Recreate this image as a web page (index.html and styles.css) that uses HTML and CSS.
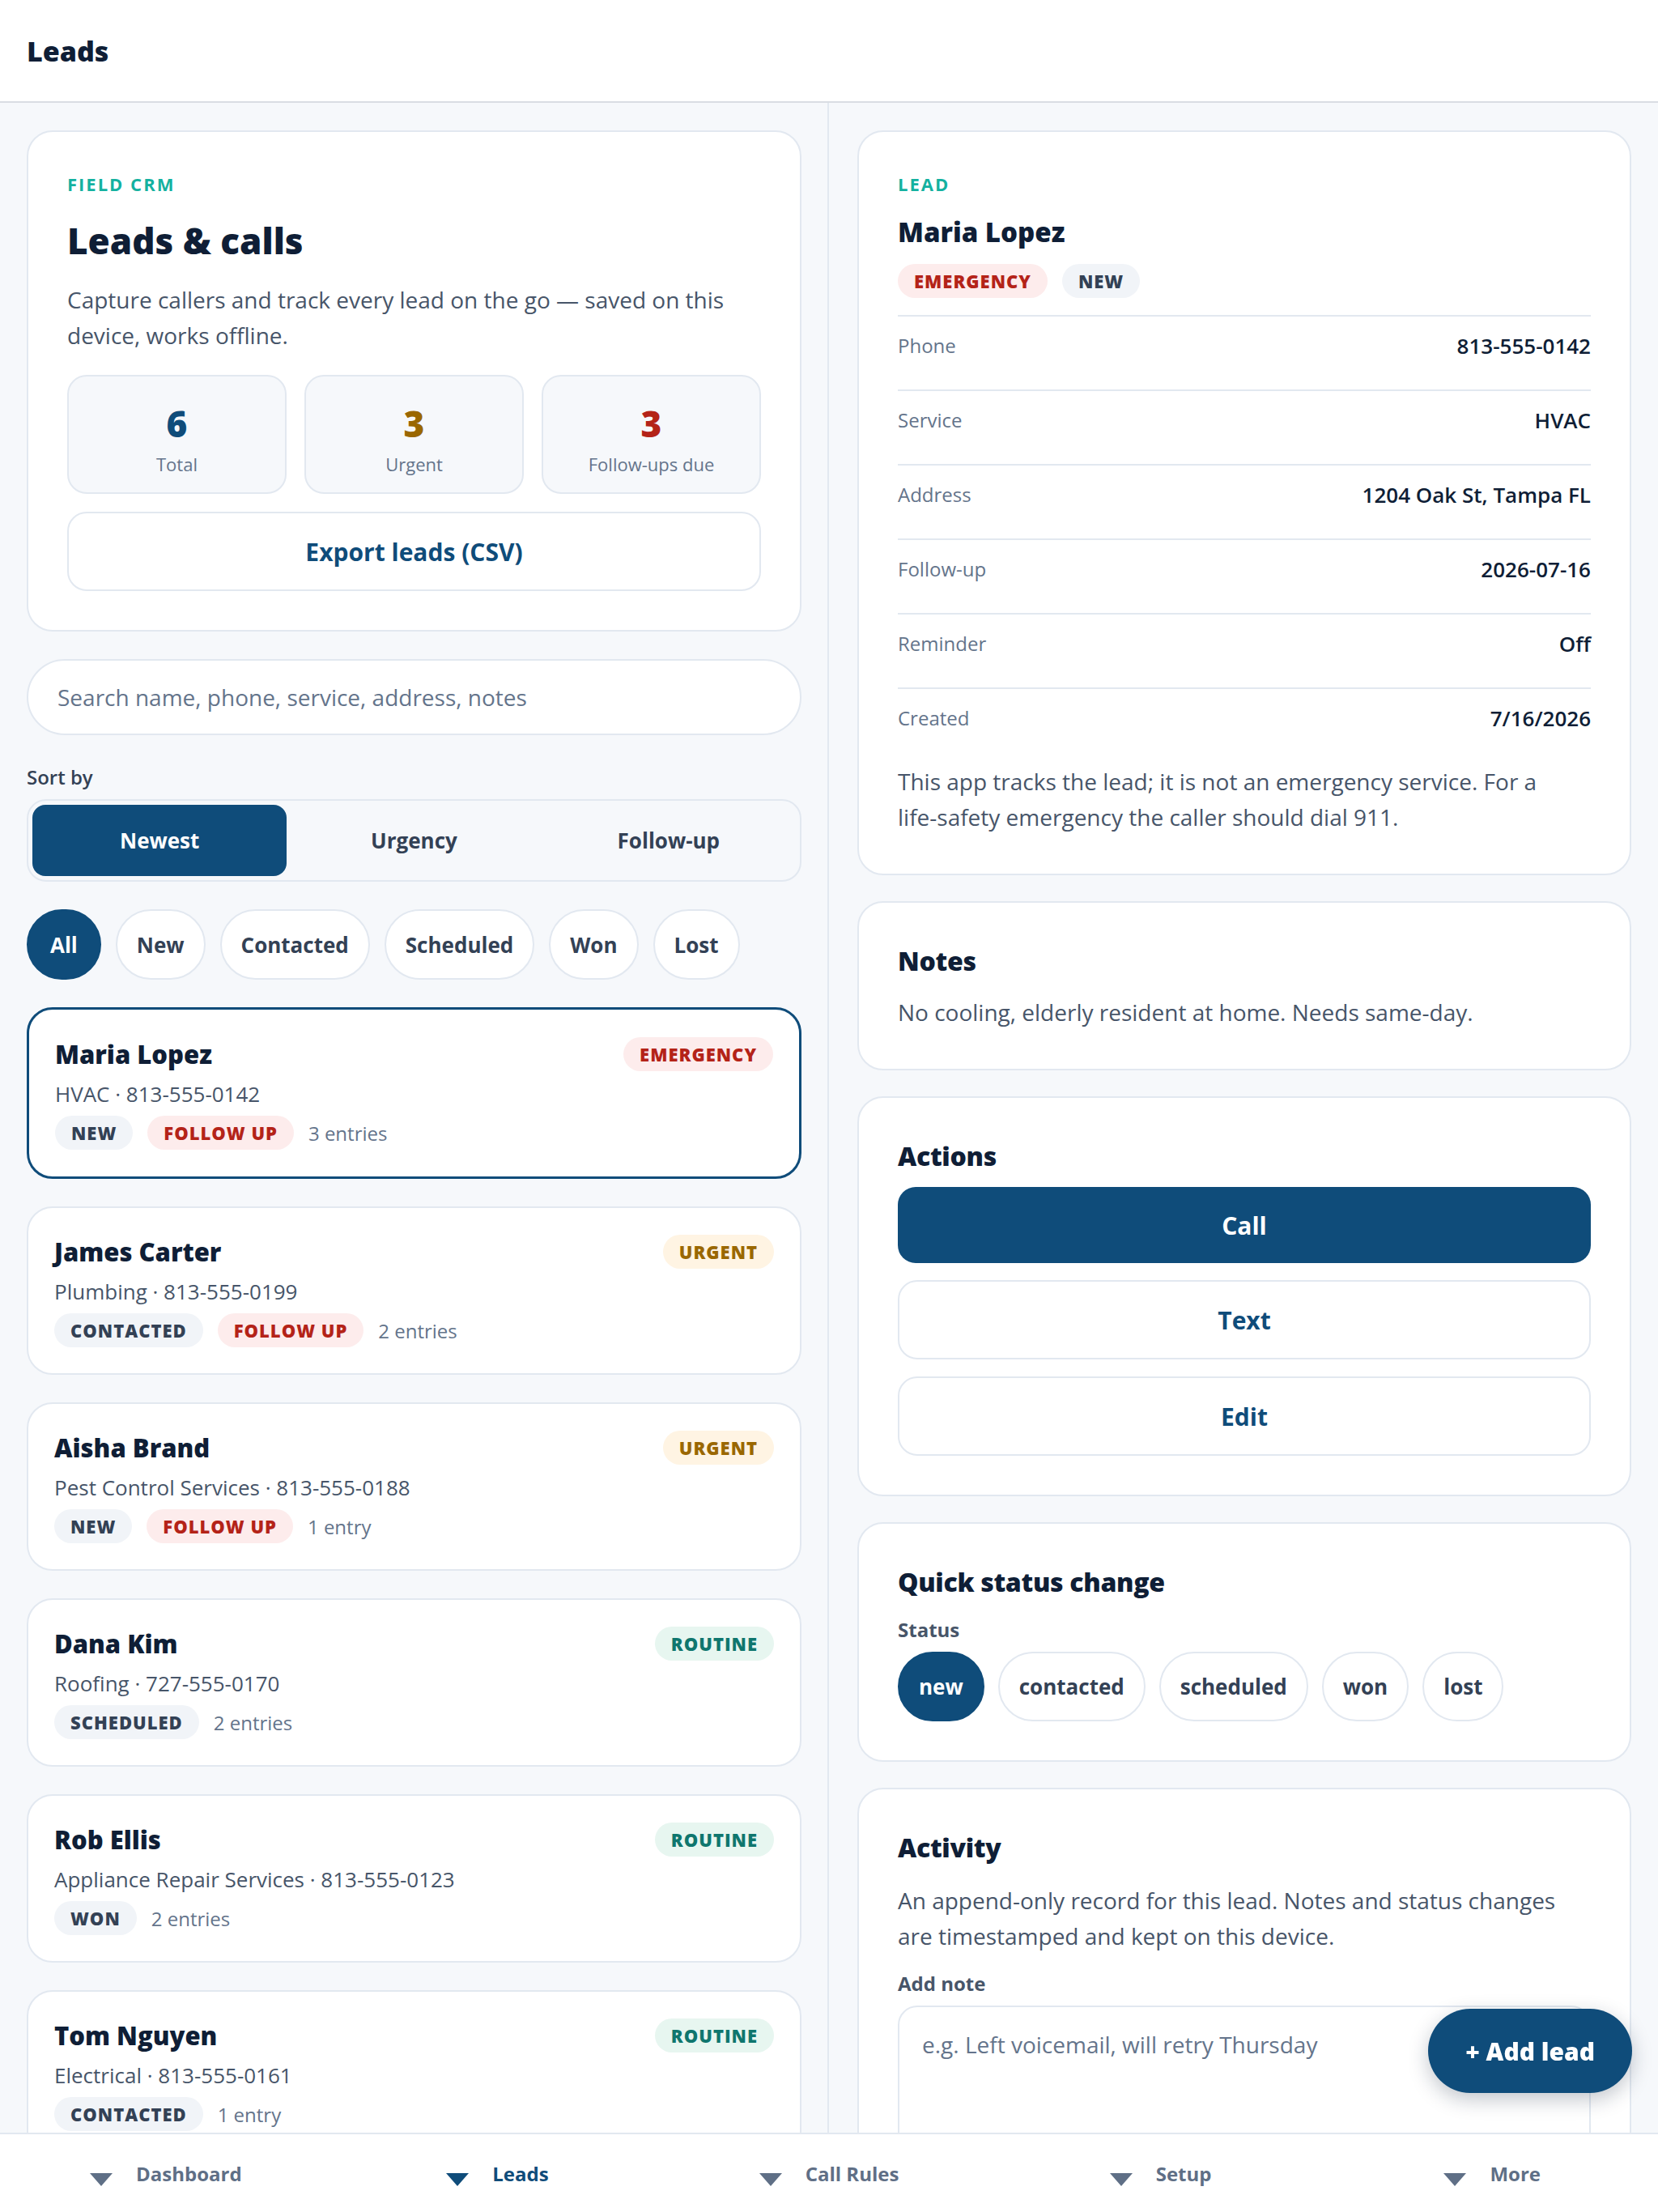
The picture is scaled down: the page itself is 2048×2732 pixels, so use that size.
FILE: index.html
```html
<!DOCTYPE html>
<html lang="en">
<head>
    <meta charset="UTF-8">
    <meta name="viewport" content="width=device-width, initial-scale=1.0">
    <title>Leads</title>
    <link rel="stylesheet" href="styles.css">
</head>
<body>
    <header class="topbar">
        <h1>Leads</h1>
    </header>

    <main class="layout">
        <section class="list-pane">
            <div class="card hero">
                <p class="eyebrow">Field CRM</p>
                <h2>Leads &amp; calls</h2>
                <p class="lede">Capture callers and track every lead on the go — saved on this device, works offline.</p>
                <div class="stats">
                    <div class="stat"><strong class="c-navy">6</strong><span>Total</span></div>
                    <div class="stat"><strong class="c-amber">3</strong><span>Urgent</span></div>
                    <div class="stat"><strong class="c-red">3</strong><span>Follow-ups due</span></div>
                </div>
                <button class="btn btn-outline export">Export leads (CSV)</button>
            </div>

            <input type="text" class="search" placeholder="Search name, phone, service, address, notes">

            <div class="sort">
                <label class="field-label">Sort by</label>
                <div class="segmented">
                    <button class="active">Newest</button>
                    <button>Urgency</button>
                    <button>Follow-up</button>
                </div>
            </div>

            <div class="chips">
                <button class="chip chip-all active">All</button>
                <button class="chip">New</button>
                <button class="chip">Contacted</button>
                <button class="chip">Scheduled</button>
                <button class="chip">Won</button>
                <button class="chip">Lost</button>
            </div>

            <div class="lead selected">
                <div class="lead-top">
                    <h3>Maria Lopez</h3>
                    <span class="pill pill-red">Emergency</span>
                </div>
                <div class="lead-sub">HVAC · 813-555-0142</div>
                <div class="lead-tags">
                    <span class="pill pill-grey">New</span>
                    <span class="pill pill-red">Follow up</span>
                    <span class="entries">3 entries</span>
                </div>
            </div>

            <div class="lead">
                <div class="lead-top">
                    <h3>James Carter</h3>
                    <span class="pill pill-amber">Urgent</span>
                </div>
                <div class="lead-sub">Plumbing · 813-555-0199</div>
                <div class="lead-tags">
                    <span class="pill pill-grey">Contacted</span>
                    <span class="pill pill-red">Follow up</span>
                    <span class="entries">2 entries</span>
                </div>
            </div>

            <div class="lead">
                <div class="lead-top">
                    <h3>Aisha Brand</h3>
                    <span class="pill pill-amber">Urgent</span>
                </div>
                <div class="lead-sub">Pest Control Services · 813-555-0188</div>
                <div class="lead-tags">
                    <span class="pill pill-grey">New</span>
                    <span class="pill pill-red">Follow up</span>
                    <span class="entries">1 entry</span>
                </div>
            </div>

            <div class="lead">
                <div class="lead-top">
                    <h3>Dana Kim</h3>
                    <span class="pill pill-green">Routine</span>
                </div>
                <div class="lead-sub">Roofing · 727-555-0170</div>
                <div class="lead-tags">
                    <span class="pill pill-grey">Scheduled</span>
                    <span class="entries">2 entries</span>
                </div>
            </div>

            <div class="lead">
                <div class="lead-top">
                    <h3>Rob Ellis</h3>
                    <span class="pill pill-green">Routine</span>
                </div>
                <div class="lead-sub">Appliance Repair Services · 813-555-0123</div>
                <div class="lead-tags">
                    <span class="pill pill-grey">Won</span>
                    <span class="entries">2 entries</span>
                </div>
            </div>

            <div class="lead">
                <div class="lead-top">
                    <h3>Tom Nguyen</h3>
                    <span class="pill pill-green">Routine</span>
                </div>
                <div class="lead-sub">Electrical · 813-555-0161</div>
                <div class="lead-tags">
                    <span class="pill pill-grey">Contacted</span>
                    <span class="entries">1 entry</span>
                </div>
            </div>
        </section>

        <section class="detail-pane">
            <div class="card">
                <p class="eyebrow">Lead</p>
                <h2 class="detail-name">Maria Lopez</h2>
                <div class="detail-pills">
                    <span class="pill pill-red">Emergency</span>
                    <span class="pill pill-grey">New</span>
                </div>
                <dl class="facts">
                    <div class="fact"><dt>Phone</dt><dd>813-555-0142</dd></div>
                    <div class="fact"><dt>Service</dt><dd>HVAC</dd></div>
                    <div class="fact"><dt>Address</dt><dd>1204 Oak St, Tampa FL</dd></div>
                    <div class="fact"><dt>Follow-up</dt><dd>2026-07-16</dd></div>
                    <div class="fact"><dt>Reminder</dt><dd>Off</dd></div>
                    <div class="fact"><dt>Created</dt><dd>7/16/2026</dd></div>
                </dl>
                <p class="muted disclaimer">This app tracks the lead; it is not an emergency service. For a <span class="nowrap">life-safety</span> emergency the caller should dial 911.</p>
            </div>

            <div class="card">
                <h3 class="card-title">Notes</h3>
                <p class="muted note-text">No cooling, elderly resident at home. Needs same-day.</p>
            </div>

            <div class="card">
                <h3 class="card-title">Actions</h3>
                <div class="actions">
                    <button class="btn btn-primary">Call</button>
                    <button class="btn btn-outline">Text</button>
                    <button class="btn btn-outline">Edit</button>
                </div>
            </div>

            <div class="card">
                <h3 class="card-title">Quick status change</h3>
                <label class="field-label status-label">Status</label>
                <div class="chips status-chips">
                    <button class="chip active">new</button>
                    <button class="chip">contacted</button>
                    <button class="chip">scheduled</button>
                    <button class="chip">won</button>
                    <button class="chip">lost</button>
                </div>
            </div>

            <div class="card">
                <h3 class="card-title">Activity</h3>
                <p class="muted activity-text">An append-only record for this lead. Notes and status changes are timestamped and kept on this device.</p>
                <label class="field-label note-label" for="note">Add note</label>
                <textarea id="note" class="note-input" placeholder="e.g. Left voicemail, will retry Thursday"></textarea>
            </div>
        </section>
    </main>

    <button class="fab">+ Add lead</button>

    <nav class="tabbar">
        <a class="tab"><svg viewBox="0 0 28 16"><polygon points="0,0 28,0 14,16"/></svg>Dashboard</a>
        <a class="tab active"><svg viewBox="0 0 28 16"><polygon points="0,0 28,0 14,16"/></svg>Leads</a>
        <a class="tab"><svg viewBox="0 0 28 16"><polygon points="0,0 28,0 14,16"/></svg>Call Rules</a>
        <a class="tab"><svg viewBox="0 0 28 16"><polygon points="0,0 28,0 14,16"/></svg>Setup</a>
        <a class="tab"><svg viewBox="0 0 28 16"><polygon points="0,0 28,0 14,16"/></svg>More</a>
    </nav>
</body>
</html>
```
FILE: styles.css
```css
* {
    box-sizing: border-box;
}
html, body {
    margin: 0;
    height: 100%;
}
body {
    font-family: "Open Sans", "Noto Sans", sans-serif;
    color: #0f1e36;
    background: #f6f8fb;
    display: flex;
    flex-direction: column;
    height: 100vh;
    overflow: hidden;
}
button, input, textarea {
    font-family: inherit;
}
.nowrap {
    white-space: nowrap;
}

/* top bar */
.topbar {
    height: 127px;
    flex-shrink: 0;
    background: #fff;
    border-bottom: 2px solid #d9dde3;
    display: flex;
    align-items: center;
    padding: 0 33px;
}
.topbar h1 {
    margin: 0;
    font-size: 34px;
    font-weight: 800;
}

/* two panes */
.layout {
    flex: 1;
    min-height: 0;
    display: grid;
    grid-template-columns: 1024px 1fr;
}
.list-pane, .detail-pane {
    display: flex;
    flex-direction: column;
    gap: 34px;
    overflow: hidden;
}
.list-pane > *, .detail-pane > * {
    flex-shrink: 0;
}
.list-pane {
    border-right: 2px solid #e2e8f0;
    padding: 34px 32px 0 33px;
}
.detail-pane {
    gap: 32px;
    padding: 34px 33px 0 35px;
}

.card {
    background: #fff;
    border: 2px solid #e2e8f0;
    border-radius: 32px;
    padding: 48px;
}
.eyebrow {
    margin: 0;
    font-size: 22px;
    line-height: 32px;
    font-weight: 700;
    letter-spacing: 2px;
    text-transform: uppercase;
    color: #14b1a0;
}
.muted {
    color: #475569;
    font-size: 28px;
    line-height: 44px;
}

/* hero */
.hero h2 {
    margin: 24px 0 0;
    font-size: 44px;
    line-height: 60px;
    font-weight: 800;
}
.lede {
    margin: 21px 0 0;
    font-size: 28px;
    line-height: 44px;
    color: #475569;
}
.stats {
    display: grid;
    grid-template-columns: repeat(3, 1fr);
    gap: 22px;
    margin-top: 27px;
}
.stat {
    background: #f6f8fb;
    border: 2px solid #e2e8f0;
    border-radius: 24px;
    padding: 28px 8px 19px;
    text-align: center;
}
.stat strong {
    display: block;
    font-size: 44px;
    line-height: 60px;
    font-weight: 800;
}
.stat span {
    display: block;
    margin-top: 4px;
    font-size: 22px;
    line-height: 32px;
    color: #64748b;
}
.c-navy { color: #0f4c7a; }
.c-amber { color: #9a6700; }
.c-red { color: #b42318; }

.btn {
    display: block;
    width: 100%;
    border-radius: 24px;
    font-size: 30px;
    font-weight: 700;
    cursor: pointer;
}
.btn-outline {
    height: 98px;
    background: #fff;
    border: 2px solid #e2e8f0;
    color: #0f4c7a;
}
.btn-primary {
    height: 94px;
    background: #0f4c7a;
    border: none;
    color: #fff;
    border-radius: 22px;
}
.export {
    margin-top: 22px;
}

/* search + sort */
.search {
    height: 94px;
    border: 2px solid #e2e8f0;
    border-radius: 47px;
    padding: 0 36px;
    font-size: 28px;
    color: #0f1e36;
    background: #fff;
    outline: none;
}
.search::placeholder, .note-input::placeholder {
    color: #64748b;
}
.field-label {
    display: block;
    font-size: 24px;
    line-height: 36px;
    font-weight: 600;
    color: #334155;
}
.segmented {
    margin-top: 9px;
    display: grid;
    grid-template-columns: repeat(3, 1fr);
    padding: 5px;
    border: 2px solid #e2e8f0;
    border-radius: 24px;
    background: #f6f8fb;
}
.segmented button {
    height: 88px;
    border: none;
    border-radius: 16px;
    background: transparent;
    font-size: 26px;
    font-weight: 700;
    color: #334155;
}
.segmented button.active {
    background: #0f4c7a;
    color: #fff;
}

.chips {
    display: flex;
    gap: 18px;
}
.chip {
    height: 87px;
    padding: 0 24px;
    border: 2px solid #e2e8f0;
    border-radius: 44px;
    background: #fff;
    font-size: 26px;
    font-weight: 700;
    color: #334155;
}
.chip-all {
    padding: 0 27px;
}
.chip.active {
    background: #0f4c7a;
    border-color: #0f4c7a;
    color: #fff;
}

/* lead list */
.lead {
    background: #fff;
    border: 2px solid #e2e8f0;
    border-radius: 32px;
    padding: 32px;
}
.lead.selected {
    border: 3px solid #0f4c7a;
    padding: 33px 32px;
}
.lead-top {
    display: flex;
    justify-content: space-between;
    align-items: center;
}
.lead-top h3 {
    margin: 0;
    font-size: 31px;
    line-height: 44px;
    font-weight: 800;
}
.lead-sub {
    margin-top: 8px;
    font-size: 26px;
    line-height: 38px;
    color: #475569;
}
.lead-tags {
    display: flex;
    align-items: center;
    gap: 18px;
    margin-top: 8px;
}
.pill {
    display: inline-flex;
    align-items: center;
    height: 42px;
    padding: 0 20px;
    border-radius: 21px;
    font-size: 22px;
    font-weight: 800;
    letter-spacing: 1px;
    text-transform: uppercase;
}
.pill-red { background: #fdecec; color: #b42318; }
.pill-amber { background: #fff4e3; color: #9a6700; }
.pill-green { background: #e7f6f0; color: #0f766e; }
.pill-grey { background: #f1f4f8; color: #334155; }
.entries {
    font-size: 24px;
    color: #64748b;
}

/* detail pane */
.detail-name {
    margin: 20px 0 0;
    font-size: 33px;
    line-height: 48px;
    font-weight: 800;
}
.detail-pills {
    display: flex;
    gap: 18px;
    margin-top: 15px;
}
.facts {
    margin: 21px 0 0;
}
.fact {
    display: flex;
    justify-content: space-between;
    border-top: 2px solid #e2e8f0;
    padding: 14px 0 32px;
    line-height: 44px;
}
.fact dt {
    font-size: 24px;
    color: #64748b;
}
.fact dd {
    margin: 0;
    font-size: 26px;
    font-weight: 600;
}
.disclaimer {
    margin: 2px 0 0;
}
.card-title {
    margin: 0;
    font-size: 32px;
    line-height: 48px;
    font-weight: 800;
    letter-spacing: -0.3px;
}
.note-text {
    margin: 17px 0 0;
}
.actions {
    display: flex;
    flex-direction: column;
    gap: 21px;
    margin-top: 14px;
}
.status-label {
    margin-top: 17px;
    font-weight: 700;
    color: #475569;
}
.status-chips {
    margin-top: 9px;
    gap: 17px;
}
.status-chips .chip {
    height: 86px;
    padding: 0 24px;
}
.activity-text {
    margin: 19px 0 0;
}
.note-label {
    margin-top: 19px;
    font-weight: 700;
    color: #475569;
}
.note-input {
    display: block;
    width: 100%;
    height: 220px;
    margin-top: 9px;
    border: 2px solid #e2e8f0;
    border-radius: 24px;
    padding: 24px 28px;
    font-size: 28px;
    line-height: 44px;
    resize: none;
    outline: none;
}

/* floating add button */
.fab {
    position: fixed;
    right: 32px;
    bottom: 147px;
    height: 104px;
    padding: 0 46px;
    border: none;
    border-radius: 52px;
    background: #0f4c7a;
    color: #fff;
    font-size: 30px;
    font-weight: 800;
    box-shadow: 0 8px 24px rgba(15, 30, 54, 0.25);
}

/* bottom tabs */
.tabbar {
    height: 98px;
    flex-shrink: 0;
    background: #fff;
    border-top: 2px solid #e2e8f0;
    display: grid;
    grid-template-columns: repeat(5, 1fr);
}
.tab {
    display: flex;
    align-items: center;
    justify-content: center;
    gap: 29px;
    font-size: 24px;
    font-weight: 700;
    color: #5f6f86;
}
.tab svg {
    width: 28px;
    height: 16px;
    margin-top: 16px;
    fill: currentColor;
}
.tab.active {
    color: #0f4c7a;
}
```
